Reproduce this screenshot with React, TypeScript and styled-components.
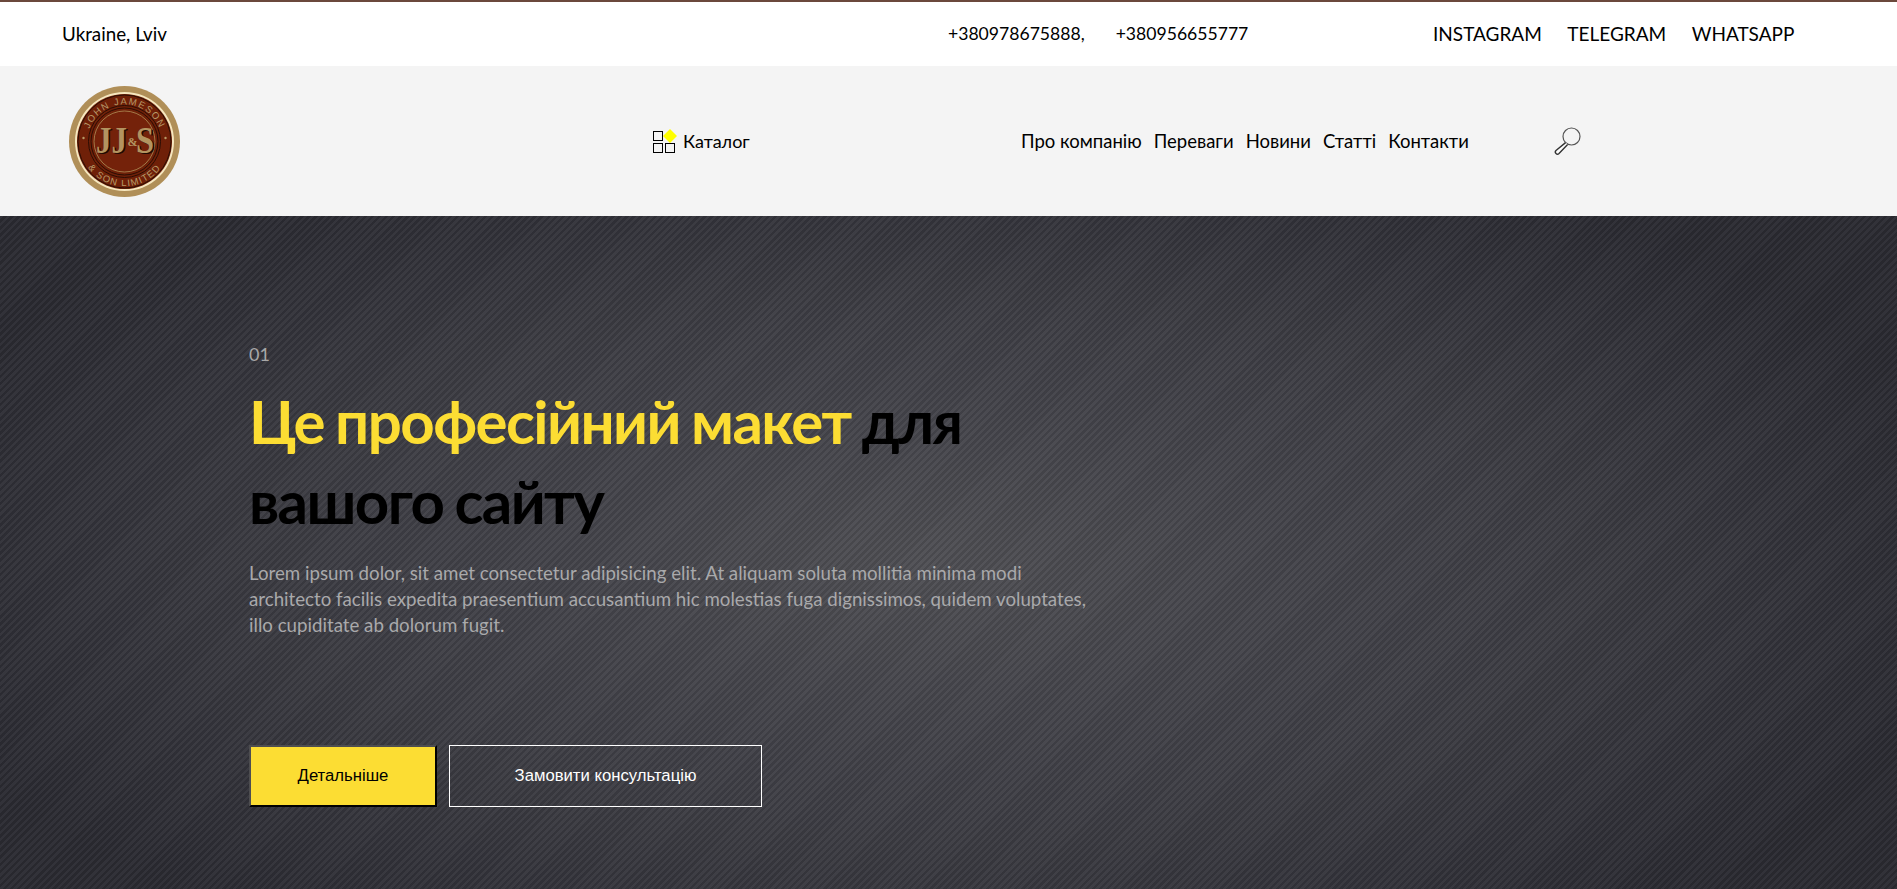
import React from "react";
import styled, { createGlobalStyle } from "styled-components";

const Global = createGlobalStyle`
  html, body { margin: 0; padding: 0; height: 100%; overflow: hidden; }
  body { font-family: Lato, "Noto Sans", sans-serif; color: #000; background: #fff; }
`;

const Page = styled.div`
  display: flex;
  flex-direction: column;
  height: 889px;
  overflow: hidden;
`;

const TopBar = styled.div`
  box-sizing: border-box;
  height: 66px;
  border-top: 2px solid #6b483c;
  background: #fff;
  display: flex;
  align-items: center;
  padding: 0 0 2px 62px;
  font-size: 18px;
`;

const Location = styled.div`
  width: 886px;
  font-size: 18.8px;
`;

const Phones = styled.div`
  display: flex;
  gap: 31px;
  width: 485px;
  font-size: 17.6px;
`;

const Socials = styled.div`
  display: flex;
  gap: 25.5px;
  font-size: 19px;
`;

const Header = styled.header`
  height: 150px;
  background: #f4f4f4;
  display: flex;
  align-items: center;
  padding: 0 0 0 69px;
  flex: none;
`;

const Catalog = styled.div`
  display: flex;
  align-items: center;
  margin-left: 473px;
  gap: 6px;
  font-size: 18px;
  width: 368px;
`;

const Nav = styled.nav`
  display: flex;
  gap: 12px;
  font-size: 18.5px;
`;

const SearchBox = styled.div`
  margin-left: 84px;
  display: flex;
`;

const Hero = styled.section`
  flex: 1;
  padding: 127px 0 0 249px;
  background:
    repeating-linear-gradient(135deg, rgba(255,255,255,0.04) 0 2.5px, rgba(0,0,0,0.06) 2.5px 5px),
    radial-gradient(ellipse 56% 68% at 49% 52%, #4e4e53 0%, #3d3d44 55%, #2a2a31 100%);
`;

const Index = styled.div`
  font-size: 18px;
  line-height: 22px;
  color: #a8a8a8;
`;

const Title = styled.h1`
  margin: 16px 0 0;
  width: 740px;
  font-size: 60px;
  line-height: 80px;
  letter-spacing: -1.55px;
  word-spacing: -2px;
  font-weight: 700;
  color: #000;
`;

const Accent = styled.span`
  color: #fcdd33;
`;

const Lead = styled.p`
  margin: 19px 0 0;
  width: 845px;
  font-size: 18.7px;
  line-height: 26px;
  color: #a9a9ab;
`;

const Actions = styled.div`
  display: flex;
  gap: 12px;
  margin-top: 107px;
`;

const Button = styled.button<{ $primary?: boolean }>`
  box-sizing: border-box;
  height: 62px;
  font-family: "Liberation Sans", Arial, sans-serif;
  font-size: 16.7px;
  cursor: pointer;
  width: ${(p) => (p.$primary ? "188px" : "313px")};
  background: ${(p) => (p.$primary ? "#fcdd33" : "transparent")};
  color: ${(p) => (p.$primary ? "#000" : "#fff")};
  border: ${(p) => (p.$primary ? "2px solid" : "1px solid #fff")};
  border-color: ${(p) => (p.$primary ? "#4d4d50 #000 #000 #4d4d50" : "#fff")};
`;

const Logo = () => (
  <svg width="111" height="111" viewBox="0 0 111 111" aria-label="JJ&S">
    <defs>
      <path id="arcTop" d="M 18.5 62 A 37.5 37.5 0 1 1 92.5 62" />
      <path id="arcBottom" d="M 11 62 A 45 45 0 0 0 100 62" />
    </defs>
    <circle cx="55.5" cy="55.5" r="55.5" fill="#b08f58" />
    <circle cx="55.5" cy="55.5" r="49.5" fill="#f6e7bf" />
    <circle cx="55.5" cy="55.5" r="47.5" fill="#6f2008" />
    <circle cx="55.5" cy="55.5" r="46.5" fill="none" stroke="#2a0d04" strokeWidth="1" />
    <circle cx="55.5" cy="55.5" r="36" fill="none" stroke="#2a0d04" strokeWidth="1" />
    <circle cx="55.5" cy="55.5" r="33.5" fill="none" stroke="#2a0d04" strokeWidth="1" />
    <circle cx="55.5" cy="55.5" r="30.5" fill="#74220a" stroke="#b08f58" strokeWidth="0.8" />
    <text fontFamily="Liberation Sans, sans-serif" fontSize="9.5" fill="#b89a68" letterSpacing="1.4">
      <textPath href="#arcTop" startOffset="50%" textAnchor="middle">JOHN JAMESON</textPath>
    </text>
    <text fontFamily="Liberation Sans, sans-serif" fontSize="9.5" fill="#b89a68" letterSpacing="1.2">
      <textPath href="#arcBottom" startOffset="50%" textAnchor="middle">&amp; SON LIMITED</textPath>
    </text>
    <circle cx="14.5" cy="52" r="1.2" fill="#b89a68" />
    <circle cx="96.5" cy="52" r="1.2" fill="#b89a68" />
    <text x="28.5" y="67.5" fontFamily="Liberation Serif, serif" fontWeight="700" fontSize="38" fill="#1e0a03" textLength="31" lengthAdjust="spacingAndGlyphs">JJ</text>
    <text x="27" y="66.5" fontFamily="Liberation Serif, serif" fontWeight="700" fontSize="38" fill="#b39460" textLength="31" lengthAdjust="spacingAndGlyphs">JJ</text>
    <text x="58.5" y="60" fontFamily="Liberation Serif, serif" fontWeight="700" fontSize="12" fill="#b39460">&amp;</text>
    <text x="68.5" y="67.5" fontFamily="Liberation Serif, serif" fontWeight="700" fontSize="38" fill="#1e0a03" textLength="18" lengthAdjust="spacingAndGlyphs">S</text>
    <text x="67" y="66.5" fontFamily="Liberation Serif, serif" fontWeight="700" fontSize="38" fill="#b39460" textLength="18" lengthAdjust="spacingAndGlyphs">S</text>
  </svg>
);

const CatalogIcon = () => (
  <svg width="24" height="24" viewBox="0 0 24 24" fill="none" stroke="#000" strokeWidth="1">
    <rect x="0.5" y="2.5" width="9" height="9" />
    <rect x="0.5" y="14.5" width="9" height="9" />
    <rect x="12.5" y="14.5" width="9" height="9" />
    <polygon points="17,0 24,7 17,14 10,7" fill="#ffff00" stroke="none" />
  </svg>
);

const SearchIcon = () => (
  <svg width="30" height="30" viewBox="0 0 30 30" fill="none">
    <circle cx="18.5" cy="10.5" r="8.5" stroke="#555" strokeWidth="1.2" />
    <path d="M12.6 16.6 L3 24.5 a2 2 0 0 0 3 3 L14.6 18.4" stroke="#333" strokeWidth="1.4" fill="#fff" />
  </svg>
);

export default function App() {
  return (
    <Page>
      <Global />
      <TopBar>
        <Location>Ukraine, Lviv</Location>
        <Phones>
          <span>+380978675888,</span>
          <span>+380956655777</span>
        </Phones>
        <Socials>
          <span>INSTAGRAM</span>
          <span>TELEGRAM</span>
          <span>WHATSAPP</span>
        </Socials>
      </TopBar>
      <Header>
        <Logo />
        <Catalog>
          <CatalogIcon />
          <span>Каталог</span>
        </Catalog>
        <Nav>
          <span>Про компанію</span>
          <span>Переваги</span>
          <span>Новини</span>
          <span>Статті</span>
          <span>Контакти</span>
        </Nav>
        <SearchBox>
          <SearchIcon />
        </SearchBox>
      </Header>
      <Hero>
        <Index>01</Index>
        <Title>
          <Accent>Це професійний макет</Accent> для вашого сайту
        </Title>
        <Lead>
          Lorem ipsum dolor, sit amet consectetur adipisicing elit. At aliquam soluta mollitia minima modi
          architecto facilis expedita praesentium accusantium hic molestias fuga dignissimos, quidem voluptates,
          illo cupiditate ab dolorum fugit.
        </Lead>
        <Actions>
          <Button $primary>Детальніше</Button>
          <Button>Замовити консультацію</Button>
        </Actions>
      </Hero>
    </Page>
  );
}
